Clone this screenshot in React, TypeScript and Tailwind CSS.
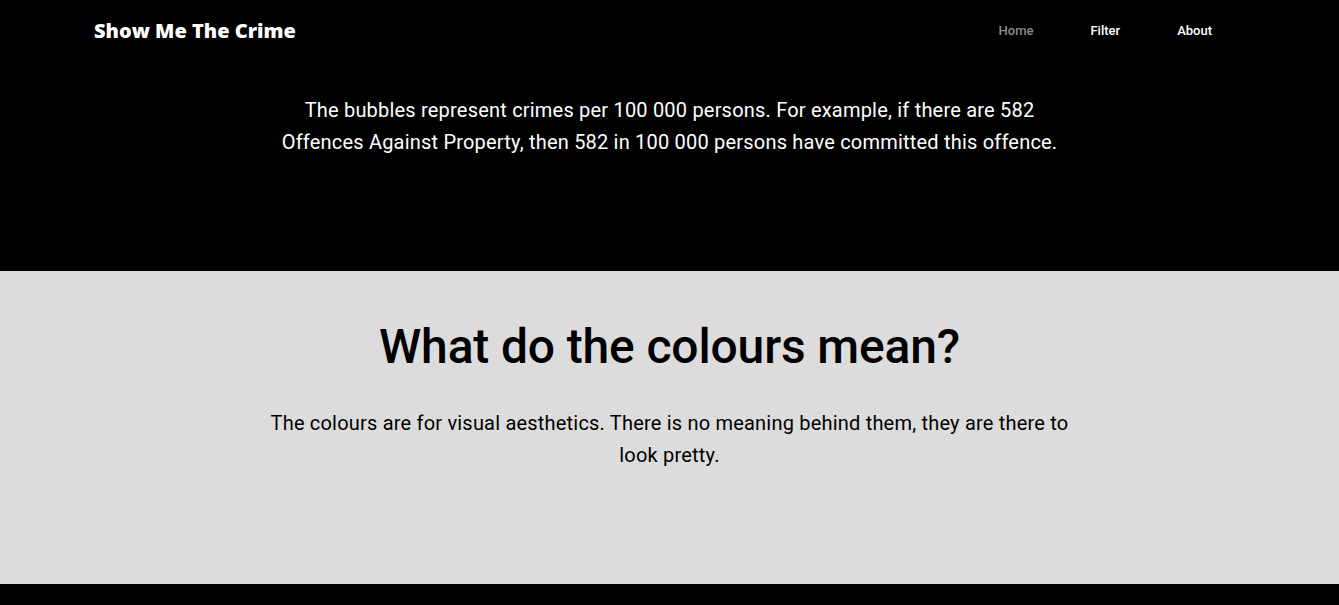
import React from "react";

const navLinks = [
  { label: "Home", active: true },
  { label: "Filter", active: false },
  { label: "About", active: false },
];

export default function App() {
  return (
    <div className="min-h-screen bg-black font-['Roboto',sans-serif]">
      {/* Top / hero */}
      <section className="bg-black h-[271px]">
        <header className="h-[61px] flex items-center justify-between pl-[94px] pr-[127px]">
          <span className="font-['Open_Sans',sans-serif] font-extrabold text-[20px] text-white">
            Show Me The Crime
          </span>
          <nav className="flex items-center gap-[57px]">
            {navLinks.map((l) => (
              <a
                key={l.label}
                href="#"
                className={
                  "text-[13px] font-medium " + (l.active ? "text-[#8a8a8a]" : "text-white")
                }
              >
                {l.label}
              </a>
            ))}
          </nav>
        </header>
        <p className="mx-auto max-w-[806px] mt-[33px] text-center text-white text-[20px] leading-[32px] tracking-[0.2px]">
          The bubbles represent crimes per 100 000 persons. For example, if there are 582 Offences
          Against Property, then 582 in 100 000 persons have committed this offence.
        </p>
      </section>

      {/* Colours */}
      <section className="bg-[#dcdcdc] h-[313px] flex flex-col items-center pt-[46px]">
        <h2 className="text-[48px] leading-[60px] font-medium tracking-[-0.15px] text-black">
          What do the colours mean?
        </h2>
        <p className="max-w-[806px] mt-[30px] text-center text-black text-[20px] leading-[32px] tracking-[0.2px]">
          The colours are for visual aesthetics. There is no meaning behind them, they are there to
          look pretty.
        </p>
      </section>
    </div>
  );
}
